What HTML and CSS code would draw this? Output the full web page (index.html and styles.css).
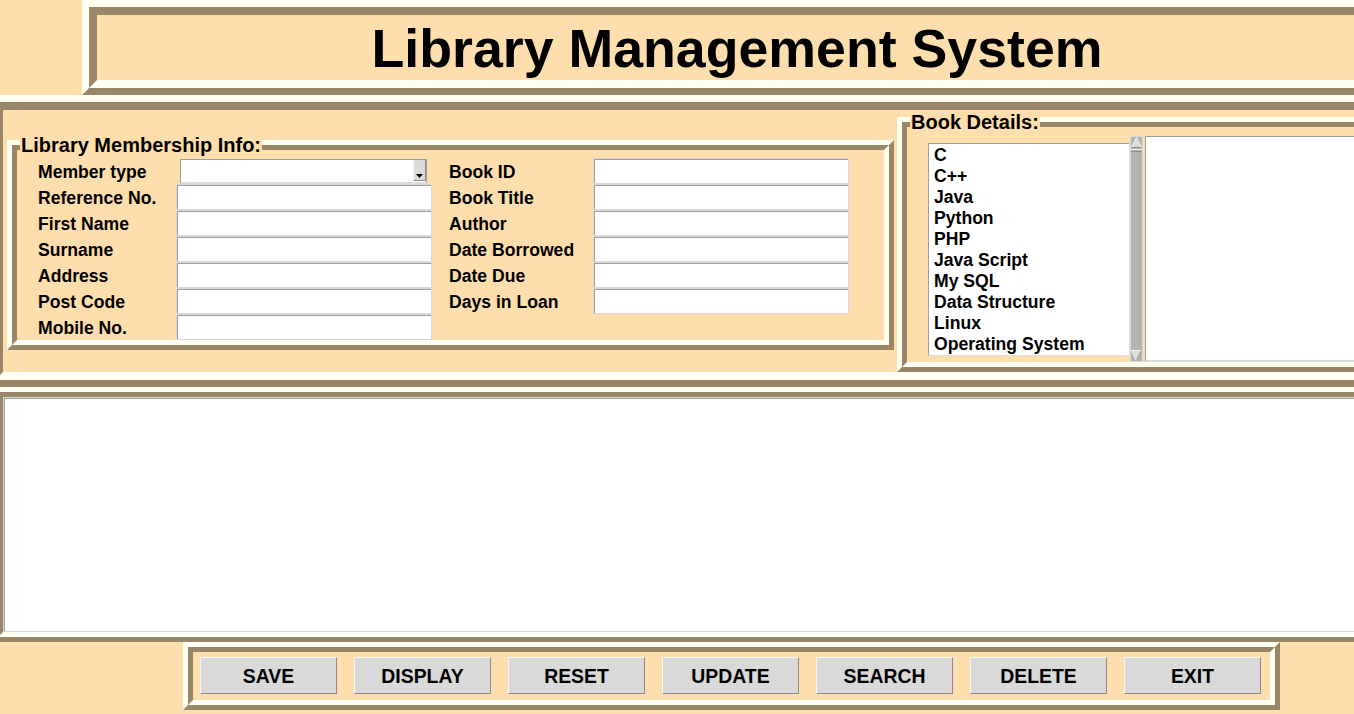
FILE: index.html
```html
<!DOCTYPE html>
<html lang="en">
<head>
<meta charset="utf-8">
<title>Library Management System</title>
<link rel="stylesheet" href="styles.css">
</head>
<body>
<div class="app">
  <header class="title-row">
    <div class="ridge-o title-frame">
      <div class="ridge-i title-in">
        <h1 class="title">Library Management System</h1>
      </div>
    </div>
  </header>

  <section class="ridge-o main-frame">
    <div class="ridge-i main-in">
      <div class="lf lf-member">
        <div class="lf-o">
          <div class="lf-i member-grid">
            <span class="lbl lbl-l">Member type</span>
            <div class="combo"><div class="combo-btn"><svg width="7" height="4" viewBox="0 0 7 4"><polygon points="0,0 7,0 3.5,4" fill="#000"/></svg></div></div>
            <span class="lbl lbl-r">Book ID</span>
            <input class="entry fld-r" type="text">

            <span class="lbl lbl-l">Reference No.</span>
            <input class="entry fld-l" type="text">
            <span class="lbl lbl-r">Book Title</span>
            <input class="entry fld-r" type="text">

            <span class="lbl lbl-l">First Name</span>
            <input class="entry fld-l" type="text">
            <span class="lbl lbl-r">Author</span>
            <input class="entry fld-r" type="text">

            <span class="lbl lbl-l">Surname</span>
            <input class="entry fld-l" type="text">
            <span class="lbl lbl-r">Date Borrowed</span>
            <input class="entry fld-r" type="text">

            <span class="lbl lbl-l">Address</span>
            <input class="entry fld-l" type="text">
            <span class="lbl lbl-r">Date Due</span>
            <input class="entry fld-r" type="text">

            <span class="lbl lbl-l">Post Code</span>
            <input class="entry fld-l" type="text">
            <span class="lbl lbl-r">Days in Loan</span>
            <input class="entry fld-r" type="text">

            <span class="lbl lbl-l">Mobile No.</span>
            <input class="entry fld-l" type="text">
          </div>
        </div>
        <span class="lf-title">Library Membership Info:</span>
      </div>

      <div class="lf lf-book">
        <div class="lf-o">
          <div class="lf-i book-body">
            <ul class="listbox">
              <li>C</li>
              <li>C++</li>
              <li>Java</li>
              <li>Python</li>
              <li>PHP</li>
              <li>Java Script</li>
              <li>My SQL</li>
              <li>Data Structure</li>
              <li>Linux</li>
              <li>Operating System</li>
            </ul>
            <div class="scrollbar">
              <svg width="13" height="226" viewBox="0 0 13 226">
                <rect x="0" y="0" width="13" height="226" fill="#b3b3b3"/>
                <rect x="0.5" y="0.5" width="12" height="225" fill="none" stroke="#d9d9d9"/>
                <polygon points="6.5,1.5 11.5,11.5 1.5,11.5" fill="#d9d9d9" stroke="#f2f2f2"/>
                <line x1="1.5" y1="11.5" x2="11.5" y2="11.5" stroke="#8a8a8a"/>
                <line x1="1" y1="13.5" x2="12" y2="13.5" stroke="#ececec"/>
                <line x1="1" y1="15.5" x2="12" y2="15.5" stroke="#8a8a8a"/>
                <polygon points="1.5,214.5 11.5,214.5 6.5,224.5" fill="#d9d9d9" stroke="#f2f2f2"/>
                <line x1="6.5" y1="224.5" x2="11.5" y2="214.5" stroke="#8a8a8a"/>
              </svg>
            </div>
            <div class="details"></div>
          </div>
        </div>
        <span class="lf-title">Book Details:</span>
      </div>
    </div>
  </section>

  <section class="ridge-o5 text-frame">
    <div class="ridge-i5 text-in">
      <textarea class="textarea"></textarea>
    </div>
  </section>

  <footer class="btn-row">
    <div class="ridge-o5 btn-frame">
      <div class="ridge-i5 btn-in">
        <button class="btn" type="button">SAVE</button>
        <button class="btn" type="button">DISPLAY</button>
        <button class="btn" type="button">RESET</button>
        <button class="btn" type="button">UPDATE</button>
        <button class="btn" type="button">SEARCH</button>
        <button class="btn" type="button">DELETE</button>
        <button class="btn" type="button">EXIT</button>
      </div>
    </div>
  </footer>
</div>
</body>
</html>
```

FILE: styles.css
```css
* { box-sizing: border-box; }

html, body {
  margin: 0;
  padding: 0;
}

body {
  width: 1354px;
  height: 714px;
  overflow: hidden;
  background: #ffdead;
  font-family: "Liberation Sans", Arial, sans-serif;
  font-weight: bold;
  color: #000;
}

.app {
  width: 1354px;
  height: 714px;
  overflow: hidden;
}

/* Tk style ridge borders */
.ridge-o {
  border: 7px solid;
  border-color: #fffff2 #998568 #998568 #fffff2;
}
.ridge-i {
  border: 8px solid;
  border-color: #998568 #fffff2 #fffff2 #998568;
}
.ridge-o5 {
  border: 5px solid;
  border-color: #fffff2 #998568 #998568 #fffff2;
}
.ridge-i5 {
  border: 5px solid;
  border-color: #998568 #fffff2 #fffff2 #998568;
}

/* Title */
.title-row {
  height: 95px;
  padding-left: 82px;
}
.title-frame {
  width: 1310px;
  height: 95px;
}
.title-in {
  height: 100%;
}
.title {
  margin: 0;
  font-size: 53.7px;
  line-height: 67px;
  text-align: center;
  font-weight: bold;
}

/* Main frame */
.main-frame {
  margin-left: -12px;
  width: 1420px;
  height: 292px;
}
.main-in {
  height: 100%;
  display: flex;
  align-items: flex-start;
  padding-left: 4px;
  gap: 3px;
}

/* Label frames */
.lf {
  position: relative;
  flex: none;
}
.lf-o {
  height: 100%;
  border: 5px solid;
  border-color: #fffff2 #998568 #998568 #fffff2;
}
.lf-i {
  height: 100%;
  border: 5px solid;
  border-color: #998568 #fffff2 #fffff2 #998568;
}
.lf-title {
  position: absolute;
  left: 13px;
  top: -6px;
  padding: 0 1px;
  background: #ffdead;
  font-size: 20px;
  line-height: 23px;
  white-space: nowrap;
}

.lf-member {
  margin-top: 30px;
  width: 887px;
  height: 210px;
}
.member-grid {
  display: grid;
  grid-template-columns: 138px 256px 17px 144px 256px;
  grid-auto-rows: 26px;
  align-items: center;
  padding: 8px 0 0 21px;
}

.lbl {
  font-size: 17.6px;
  line-height: 20px;
  padding-top: 2px;
  white-space: nowrap;
}
.lbl-l { grid-column: 1; }
.fld-l { grid-column: 2; }
.lbl-r { grid-column: 4; }
.fld-r { grid-column: 5; }

.entry {
  display: block;
  width: 256px;
  height: 26px;
  margin: 0;
  padding: 0 3px;
  border: 1px solid #d9d9d9;
  box-shadow: inset 1px 1px 0 #9e9e9e;
  background: #fff;
  font: inherit;
  outline: none;
  -webkit-appearance: none;
  appearance: none;
}

.combo {
  grid-column: 2;
  align-self: start;
  margin: 1px 0 0 4px;
  width: 247px;
  height: 25px;
  background: #fff;
  border-top: 1px solid #9e9e9e;
  border-left: 1px solid #9e9e9e;
  border-bottom: 2px solid #dcdcdc;
  border-right: 1px solid #9e9e9e;
  display: flex;
  justify-content: flex-end;
}
.combo-btn {
  width: 13px;
  height: 21px;
  background: #d9d9d9;
  border-left: 1px solid #f4f4f4;
  border-right: 1px solid #8a8a8a;
  border-bottom: 1px solid #8a8a8a;
  display: flex;
  align-items: flex-end;
  justify-content: center;
  padding-bottom: 2px;
}
.combo-btn svg { display: block; }

/* Book details */
.lf-book {
  margin-top: 7px;
  width: 520px;
  height: 255px;
}
.book-body {
  display: flex;
  align-items: center;
  padding: 9px 0 0 21px;
}
.listbox {
  flex: none;
  list-style: none;
  margin: 0;
  padding: 1px 0 0 5px;
  width: 202px;
  height: 213px;
  background: #fff;
  border-top: 1px solid #9e9e9e;
  border-left: 1px solid #9e9e9e;
  border-bottom: 1px solid #dcdcdc;
  border-right: 1px solid #dcdcdc;
  font-size: 17.6px;
  line-height: 21px;
}
.listbox li {
  white-space: nowrap;
}
.scrollbar {
  width: 13px;
  height: 226px;
  flex: none;
}
.scrollbar svg { display: block; }
.details {
  margin-left: 2px;
  flex: none;
  width: 400px;
  height: 226px;
  background: #fff;
  border-top: 1px solid #9e9e9e;
  border-left: 1px solid #9e9e9e;
  border-bottom: 2px solid #dcdcdc;
}

/* Text area frame */
.text-frame {
  margin-left: -7px;
  width: 1420px;
  height: 255px;
}
.text-in {
  height: 100%;
}
.textarea {
  display: block;
  width: 100%;
  height: 100%;
  margin: 0;
  padding: 0;
  resize: none;
  border: 1px solid #d9d9d9;
  box-shadow: inset 1px 1px 0 #9e9e9e;
  background: #fff;
  outline: none;
  font: inherit;
}

/* Buttons */
.btn-row {
  height: 72px;
  padding-left: 183px;
}
.btn-frame {
  width: 1097px;
  height: 68px;
}
.btn-in {
  height: 100%;
  display: flex;
  align-items: flex-start;
  gap: 17px;
  padding: 5px 0 0 7px;
}
.btn {
  width: 137px;
  height: 37px;
  margin: 0;
  padding: 2px 0 0;
  background: #d9d9d9;
  border: 1px solid;
  border-color: #f7f7f7 #8a8a8a #8a8a8a #f7f7f7;
  font-family: "Liberation Sans", Arial, sans-serif;
  font-weight: bold;
  font-size: 19.4px;
  color: #000;
  line-height: 33px;
  text-align: center;
  cursor: pointer;
}
```
